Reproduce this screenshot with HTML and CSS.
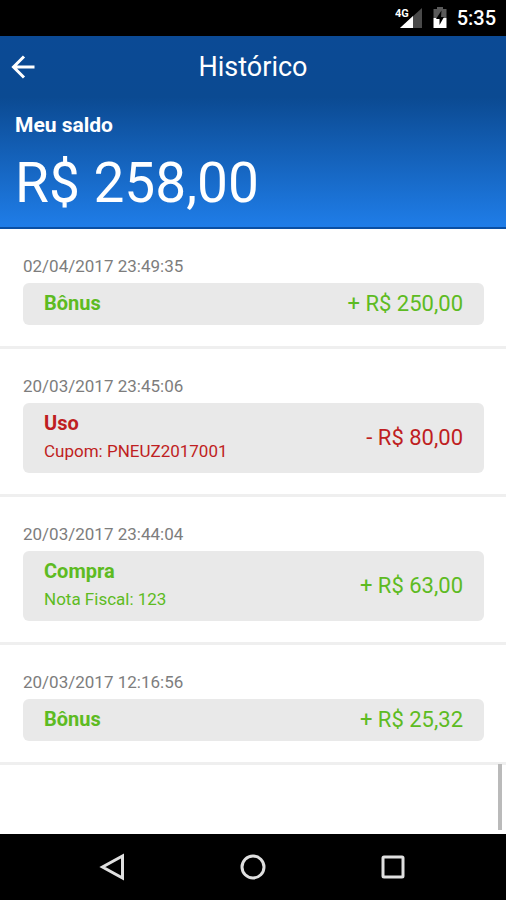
FILE: index.html
```html
<!DOCTYPE html>
<html lang="pt-BR">
<head>
  <meta charset="UTF-8">
  <meta name="viewport" content="width=device-width, initial-scale=1.0">
  <title>Histórico</title>
  <link rel="stylesheet" href="styles.css">
</head>
<body>
  <div class="status-bar">
    <svg class="signal" width="28" height="24" viewBox="0 0 28 24" aria-hidden="true">
      <path d="M27 2v20H5z" fill="#4a4a4a"/>
      <path d="M18 10v12H5z" fill="#fff"/>
      <text x="0" y="11" class="signal-label">4G</text>
    </svg>
    <svg class="battery" width="16" height="24" viewBox="0 0 16 24" aria-hidden="true">
      <path d="M5 1h6v2h3.500v9h-13V3H5z" fill="#5a5a5a"/>
      <path d="M1.500 12h13v10h-13z" fill="#fff"/>
      <path d="M9.500 4.500L4 13h3.500v6L12 11H9z" fill="#000"/>
    </svg>
    <span class="clock">5:35</span>
  </div>

  <header class="header">
    <div class="toolbar">
      <button class="back" type="button" aria-label="Voltar">
        <svg width="24" height="24" viewBox="0 0 24 24" fill="none" stroke="#fff" stroke-width="3">
          <path d="M23.500 12H3M13 1.500L2.500 12L13 22.500"/>
        </svg>
      </button>
      <h1 class="title">Histórico</h1>
    </div>
    <div class="balance">
      <p class="balance-label">Meu saldo</p>
      <p class="balance-value">R$ 258,00</p>
    </div>
  </header>

  <main class="content">
    <ul class="history">
      <li class="entry credit">
        <time class="date" datetime="2017-04-02T23:49:35">02/04/2017 23:49:35</time>
        <div class="card">
          <div class="info">
            <strong class="type">Bônus</strong>
          </div>
          <span class="amount">+ R$ 250,00</span>
        </div>
      </li>
      <li class="entry debit">
        <time class="date" datetime="2017-03-20T23:45:06">20/03/2017 23:45:06</time>
        <div class="card">
          <div class="info">
            <strong class="type">Uso</strong>
            <span class="detail">Cupom: PNEUZ2017001</span>
          </div>
          <span class="amount">- R$ 80,00</span>
        </div>
      </li>
      <li class="entry credit">
        <time class="date" datetime="2017-03-20T23:44:04">20/03/2017 23:44:04</time>
        <div class="card">
          <div class="info">
            <strong class="type">Compra</strong>
            <span class="detail">Nota Fiscal: 123</span>
          </div>
          <span class="amount">+ R$ 63,00</span>
        </div>
      </li>
      <li class="entry credit">
        <time class="date" datetime="2017-03-20T12:16:56">20/03/2017 12:16:56</time>
        <div class="card">
          <div class="info">
            <strong class="type">Bônus</strong>
          </div>
          <span class="amount">+ R$ 25,32</span>
        </div>
      </li>
    </ul>
    <div class="scroll-thumb"></div>
  </main>

  <nav class="nav-bar">
    <button class="nav-button" type="button" aria-label="Voltar">
      <svg width="28" height="28" viewBox="0 0 28 28" fill="none" stroke="#e0e0e0" stroke-width="3">
        <path d="M23.500 3v22L3.500 14z"/>
      </svg>
    </button>
    <button class="nav-button" type="button" aria-label="Início">
      <svg width="28" height="28" viewBox="0 0 28 28" fill="none" stroke="#e0e0e0" stroke-width="3">
        <circle cx="14" cy="14" r="11"/>
      </svg>
    </button>
    <button class="nav-button" type="button" aria-label="Aplicativos recentes">
      <svg width="28" height="28" viewBox="0 0 28 28" fill="none" stroke="#e0e0e0" stroke-width="3">
        <rect x="4" y="4" width="20" height="20" rx="1"/>
      </svg>
    </button>
  </nav>
</body>
</html>
```

FILE: styles.css
```css
* {
  margin: 0;
  padding: 0;
  box-sizing: border-box;
}

body {
  display: flex;
  flex-direction: column;
  min-height: 100vh;
  background: #fff;
  font-family: Roboto, sans-serif;
}

button {
  background: none;
  border: none;
  cursor: pointer;
}

svg {
  display: block;
}

/* Status bar */
.status-bar {
  display: flex;
  justify-content: flex-end;
  align-items: center;
  gap: 9px;
  height: 36px;
  padding: 0 10px;
  background: #000;
  color: #fff;
}

.signal-label {
  fill: #fff;
  stroke: #000;
  stroke-width: 2px;
  paint-order: stroke;
  font-size: 11px;
  font-weight: 700;
}

.clock {
  font-size: 20px;
  font-weight: 500;
  line-height: 24px;
}

/* Header */
.header {
  background: linear-gradient(#0b4a95, #0b4a92 32%, #1f7de8);
  border-bottom: 2px solid #0a4fa3;
  color: #fff;
}

.toolbar {
  display: grid;
  grid-template-columns: 48px 1fr 48px;
  align-items: center;
  height: 62px;
}

.back {
  padding: 12px 11px;
}

.title {
  font-size: 27px;
  font-weight: 400;
  line-height: 32px;
  text-align: center;
}

.balance {
  padding: 14px 15px 12px;
}

.balance-label {
  font-size: 21px;
  font-weight: 700;
  line-height: 26px;
}

.balance-value {
  margin-top: 13px;
  font-size: 55px;
  line-height: 64px;
}

/* History list */
.content {
  position: relative;
  flex: 1;
}

.history {
  list-style: none;
}

.entry {
  padding: 27px 22px 21px 23px;
  border-bottom: 3px solid #efefef;
}

.date {
  display: block;
  margin-bottom: 7px;
  color: #7d7d7d;
  font-size: 17px;
  line-height: 20px;
}

.card {
  display: flex;
  justify-content: space-between;
  align-items: center;
  padding: 6px 21px 8px;
  background: #e9e9e9;
  border-radius: 6px;
}

.info {
  display: flex;
  flex-direction: column;
}

.type {
  font-size: 20px;
  font-weight: 700;
  line-height: 28px;
}

.detail {
  font-size: 17px;
  line-height: 28px;
}

.amount {
  padding-top: 2px;
  font-size: 22px;
  line-height: 26px;
}

.credit .card {
  color: #5dbb22;
}

.debit .card {
  color: #bf1e22;
}

.scroll-thumb {
  position: absolute;
  right: 4px;
  bottom: 4px;
  width: 4px;
  height: 66px;
  background: #bababa;
}

/* Navigation bar */
.nav-bar {
  display: flex;
  justify-content: center;
  gap: 84px;
  padding: 5px 0;
  background: #000;
}

.nav-button {
  display: flex;
  justify-content: center;
  align-items: center;
  width: 56px;
  height: 56px;
}
```
